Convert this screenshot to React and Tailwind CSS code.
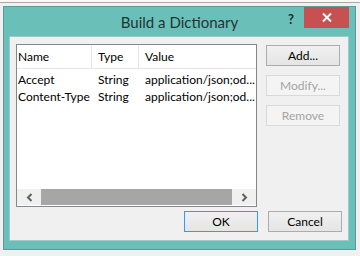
import React from 'react'

const rows = [
  { name: 'Accept', type: 'String', value: 'application/json;od...' },
  { name: 'Content-Type', type: 'String', value: 'application/json;od...' },
]

function Button({ children, disabled, primary }) {
  return (
    <div
      className={`flex h-[21px] w-[74px] items-center justify-center border text-[12px] ${
        disabled
          ? 'border-[#d9d9d9] bg-[#f4f4f4] text-[#a3a3a3]'
          : primary
            ? 'border-[#3399ff] bg-gradient-to-b from-[#f0f0f0] to-[#e5e5e5] text-black'
            : 'border-[#acacac] bg-gradient-to-b from-[#f0f0f0] to-[#e5e5e5] text-black'
      }`}
    >
      {children}
    </div>
  )
}

export default function App() {
  return (
    <div
      className="h-[256px] w-[360px] overflow-hidden bg-[#f0f0f0]"
      style={{ fontFamily: 'Lato, "Noto Sans", sans-serif' }}
    >
      <div className="h-[2px] bg-[#f8f8f8]" />
      <div className="h-px bg-[#a9a9a9]" />
      <div className="ml-[3px] mt-[3px] flex h-[244px] w-[353px] flex-col border border-[#5a9c98] bg-[#6bbfb9]">
        {/* title bar */}
        <div className="relative flex h-[29px] items-center justify-center">
          <span className="pt-[1px] text-[15px] text-[#1e3535]">Build a Dictionary</span>
          <span className="absolute right-[61px] top-[3px] text-[13px] font-bold text-[#1e2b2b]">?</span>
          <div className="absolute right-[6px] top-0 flex h-[21px] w-[45px] items-center justify-center bg-[#c75050]">
            <svg width="10" height="9" viewBox="0 0 10 9">
              <path d="M1 0.5 L9 8.5 M9 0.5 L1 8.5" stroke="#fff" strokeWidth="2" />
            </svg>
          </div>
        </div>
        {/* client area */}
        <div className="ml-[5px] mr-[6px] flex h-[205px] flex-col border border-[#9fc9c5] bg-[#f0f0f0] px-[6px] pt-[7px]">
          <div className="flex">
            <div className="flex h-[163px] w-[241px] flex-col border border-[#828790] bg-white text-[12px] text-black">
              <div className="flex h-[24px] border-b border-[#e5e5e5] pt-[1px]">
                <div className="flex w-[75px] items-center border-r border-[#e5e5e5] pl-[1px]">Name</div>
                <div className="flex w-[47px] items-center border-r border-[#e5e5e5] pl-[6px]">Type</div>
                <div className="flex items-center pl-[6px]">Value</div>
              </div>
              <div className="flex-1 pt-[2px]">
                {rows.map(r => (
                  <div key={r.name} className="flex h-[17px] items-center whitespace-nowrap">
                    <div className="w-[75px] pl-[1px]">{r.name}</div>
                    <div className="w-[47px] pl-[6px]">{r.type}</div>
                    <div className="pl-[6px]">{r.value}</div>
                  </div>
                ))}
              </div>
              <div className="mb-px flex h-[16px] bg-[#f0f0f0]">
                <div className="flex w-[24px] items-center justify-center">
                  <svg width="7" height="9" viewBox="0 0 7 9">
                    <path d="M5.5 1 L2 4.5 L5.5 8" stroke="#606060" strokeWidth="2" fill="none" />
                  </svg>
                </div>
                <div className="flex-1 bg-[#a6a6a6]" />
                <div className="flex w-[24px] items-center justify-center">
                  <svg width="7" height="9" viewBox="0 0 7 9">
                    <path d="M1.5 1 L5 4.5 L1.5 8" stroke="#606060" strokeWidth="2" fill="none" />
                  </svg>
                </div>
              </div>
            </div>
            <div className="ml-[9px] flex flex-col gap-[9px] pt-[1px]">
              <Button>Add...</Button>
              <Button disabled>Modify...</Button>
              <Button disabled>Remove</Button>
            </div>
          </div>
          <div className="mt-[4px] flex justify-end gap-[10px]">
            <Button primary>OK</Button>
            <Button>Cancel</Button>
          </div>
        </div>
      </div>
    </div>
  )
}
